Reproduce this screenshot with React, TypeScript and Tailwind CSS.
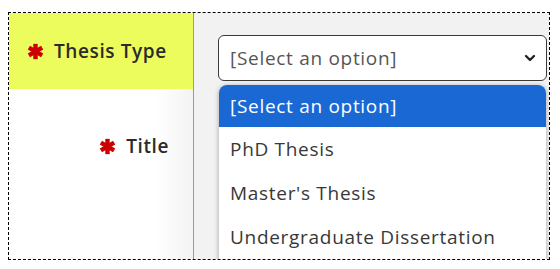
import { ChevronDown } from "lucide-react";

function Star({ className = "" }: { className?: string }) {
  return (
    <svg viewBox="0 0 20 20" className={className} aria-hidden="true">
      <g stroke="#cc0000" strokeWidth="5.2" strokeLinecap="butt">
        <line x1="10" y1="1" x2="10" y2="19" />
        <line x1="2.2" y1="5.5" x2="17.8" y2="14.5" />
        <line x1="2.2" y1="14.5" x2="17.8" y2="5.5" />
      </g>
    </svg>
  );
}

const options = ["PhD Thesis", "Master's Thesis", "Undergraduate Dissertation"];

export default function App() {
  return (
    <div className="w-[560px] h-[269px] bg-white pt-[12px] pl-[8px] font-['Open_Sans',sans-serif]">
      <div className="relative w-[542px] h-[248px] border border-dashed border-black overflow-hidden grid grid-cols-[185px_1fr] grid-rows-[76px_1fr]">
        {/* Thesis Type row */}
        <div className="bg-[#ebfc5c] border-r border-[#9a9a9a] flex items-center pl-[18px] gap-[10px]">
          <Star className="w-[17px] h-[17px]" />
          <span className="text-[19px] font-semibold tracking-[0.6px] text-[#2b2b2b]">Thesis Type</span>
        </div>
        <div className="bg-[#f2f2f2] pl-[24px] pr-[2px] pt-[22px]">
          <div className="h-[46px] bg-white border border-[#3a3a3a] rounded-[6px] flex items-center justify-between pl-[11px] pr-[8px]">
            <span className="text-[19px] tracking-[0.7px] text-[#555]">[Select an option]</span>
            <ChevronDown className="w-[16px] h-[16px] text-[#222]" strokeWidth={3.5} />
          </div>
        </div>

        {/* Title row */}
        <div className="bg-gradient-to-r from-white from-80% to-[#f3f3f3] border-r border-[#9a9a9a] flex justify-end pr-[24px] pt-[43px] gap-[10px]">
          <Star className="w-[17px] h-[17px] mt-[6px]" />
          <span className="text-[19px] font-semibold tracking-[0.6px] text-[#2b2b2b]">Title</span>
        </div>
        <div className="bg-[#f2f2f2]" />

        {/* Open dropdown list */}
        <div className="absolute left-[210px] top-[72px] w-[327px] h-[200px] bg-white rounded-[8px] shadow-[0_1px_5px_rgba(0,0,0,0.35)] overflow-hidden">
          <div className="h-[42px] bg-[#1a68d4] flex items-center pl-[11px] text-[19px] tracking-[0.7px] text-white">
            [Select an option]
          </div>
          {options.map((o) => (
            <div key={o} className="h-[44px] flex items-center pl-[11px] text-[19px] tracking-[0.7px] text-[#383838]">
              {o}
            </div>
          ))}
        </div>
      </div>
    </div>
  );
}
